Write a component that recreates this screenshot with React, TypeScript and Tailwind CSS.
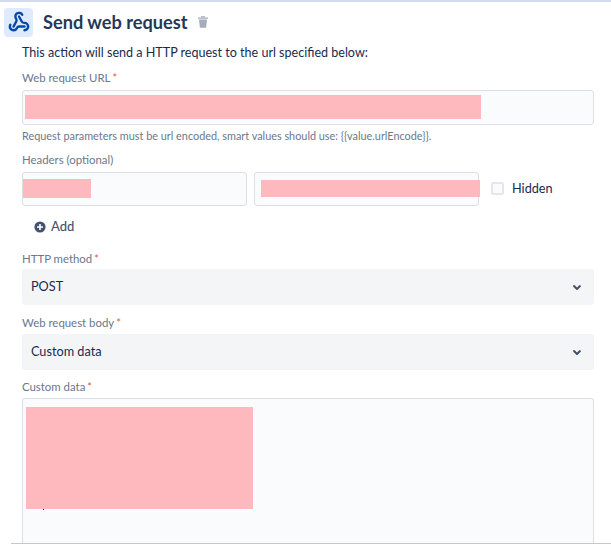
import { Webhook } from "lucide-react";

const font = { fontFamily: 'Lato, sans-serif' };

function Label({ text, required }: { text: string; required?: boolean }) {
  return (
    <div className="flex h-[12px] items-center text-[11.4px] leading-[12px] text-[#6b778c]">
      {text}
      {required && <span className="ml-[2px] text-[11px] text-[#e0604a]">*</span>}
    </div>
  );
}

function Chevron() {
  return (
    <svg width="24" height="24" viewBox="0 0 24 24" className="text-[#42526e]">
      <path
        d="M8.3 10.3a1 1 0 0 1 1.4 0l2.3 2.3 2.3-2.3a1 1 0 0 1 1.4 1.4l-3 3a1 1 0 0 1-1.4 0l-3-3a1 1 0 0 1 0-1.4z"
        fill="currentColor"
      />
    </svg>
  );
}

function SelectBox({ value }: { value: string }) {
  return (
    <div className="flex h-[36px] items-center justify-between rounded-[3px] bg-[#f4f5f7] pl-[9px] pr-[5px] text-[12.7px] text-[#172b4d]">
      <span>{value}</span>
      <Chevron />
    </div>
  );
}

export default function App() {
  return (
    <div style={font} className="flex h-[544px] w-[611px] flex-col overflow-hidden bg-white text-[#172b4d]">
      <div className="h-[2px] bg-[#d3dcec]" />

      {/* Header */}
      <div className="mt-[6px] flex h-[29px] items-center pl-[4px]">
        <div className="flex h-[29px] w-[29px] items-center justify-center rounded-[4px] bg-[#deebff]">
          <Webhook size={22} strokeWidth={2.6} className="text-[#0747a6]" />
        </div>
        <h1 className="ml-[10px] text-[18.2px] font-bold leading-[29px] text-[#253858]">Send web request</h1>
        <svg width="12" height="14" viewBox="0 0 12 14" className="ml-[10px] text-[#a5adba]">
          <path d="M1 2.5h10v1.3H1zM4 1.2h4v1H4zM2 4.6h8l-.9 8.2H2.9z" fill="currentColor" />
        </svg>
      </div>

      <div className="flex flex-1 flex-col pl-[22px] pr-[17px]">
        <p className="mt-[7px] text-[12.55px] leading-[18px]">This action will send a HTTP request to the url specified below:</p>

        {/* URL */}
        <div className="mt-[10px]">
          <Label text="Web request URL" required />
        </div>
        <div className="mt-[6px] flex h-[35px] items-center rounded-[3px] border border-[#dcdfe6] bg-[#fafbfc] pl-[2px]">
          <div className="h-[24px] w-[456px] bg-[#fdb9bd]" />
        </div>
        <p className="mt-[4px] text-[10.87px] leading-[14px] text-[#6b778c]">
          Request parameters must be url encoded, smart values should use: {"{{value.urlEncode}}"}.
        </p>

        {/* Headers */}
        <div className="mt-[11px]">
          <Label text="Headers (optional)" />
        </div>
        <div className="mt-[6px] flex items-center">
          <div className="flex h-[34px] w-[225px] items-center rounded-[3px] border border-[#dcdfe6] bg-[#fafbfc]">
            <div className="h-[19px] w-[68px] bg-[#fdb9bd]" />
          </div>
          <div className="ml-[7px] flex h-[34px] w-[225px] items-center rounded-[3px] border border-[#dcdfe6] bg-[#fafbfc] pl-[6px]">
            <div className="h-[17px] w-[219px] shrink-0 bg-[#fdb9bd]" />
          </div>
          <div className="ml-[12px] h-[13px] w-[13px] rounded-[2px] border-2 border-[#e4e6eb] bg-[#fafbfc]" />
          <span className="ml-[8px] text-[12.7px]">Hidden</span>
        </div>

        {/* Add */}
        <div className="ml-[12px] mt-[12px] flex h-[19px] items-center gap-[5px] text-[13px] font-medium text-[#42526e]">
          <svg width="12" height="12" viewBox="0 0 12 12">
            <circle cx="6" cy="6" r="5.6" fill="#42526e" />
            <path d="M5.2 3h1.6v2.2H9v1.6H6.8V9H5.2V6.8H3V5.2h2.2z" fill="#fff" />
          </svg>
          <span>Add</span>
        </div>

        {/* Method */}
        <div className="mt-[16px]">
          <Label text="HTTP method" required />
        </div>
        <div className="mt-[4px]">
          <SelectBox value="POST" />
        </div>

        <div className="mt-[12px]">
          <Label text="Web request body" required />
        </div>
        <div className="mt-[5px]">
          <SelectBox value="Custom data" />
        </div>

        {/* Custom data */}
        <div className="mt-[11px]">
          <Label text="Custom data" required />
        </div>
        <div className="mt-[5px] h-[145px] rounded-t-[3px] border border-b-0 border-[#dcdfe6] bg-[#fafbfc] pl-[3px] pt-[8px]">
          <div className="h-[102px] w-[227px] bg-[#fdb9bd]" />
          <div className="ml-[17px] h-[1px] w-[1px] bg-[#172b4d]" />
        </div>
      </div>

      <div className="ml-[11px] h-[2px] bg-[#c8c8c8]" />
    </div>
  );
}
